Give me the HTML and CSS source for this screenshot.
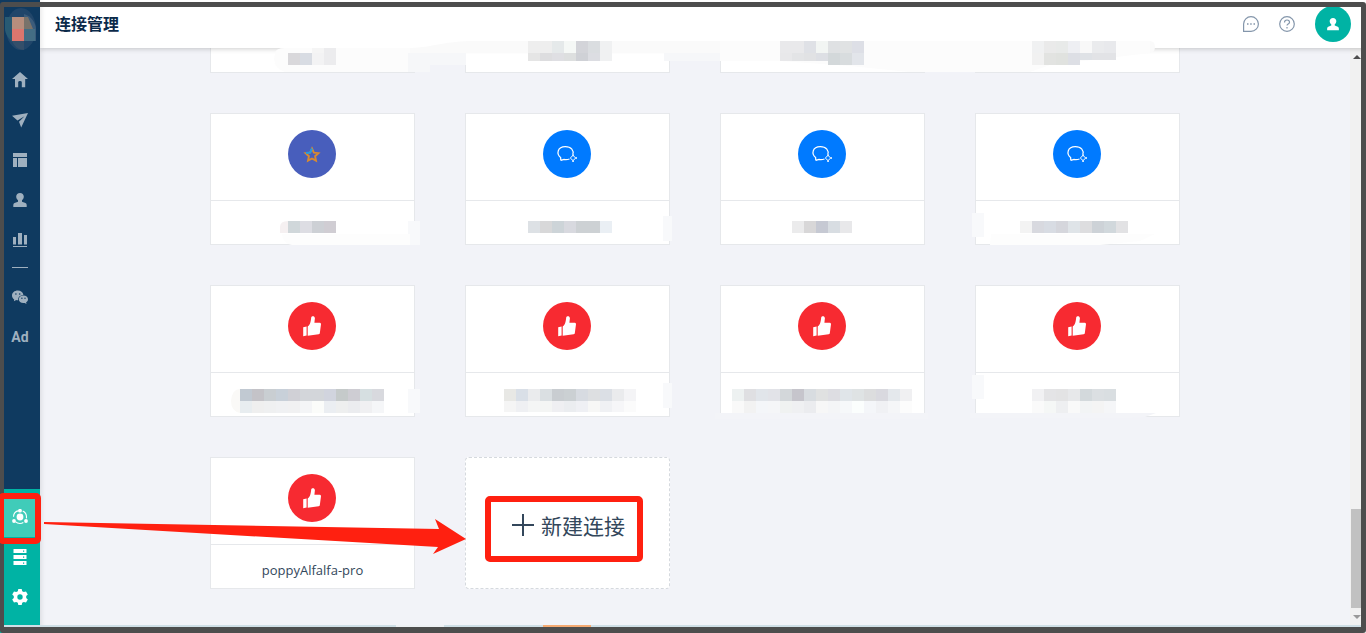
FILE: index.html
```html
<!DOCTYPE html>
<html lang="zh-CN">
<head>
  <meta charset="UTF-8" />
  <title>连接管理</title>
  <link rel="stylesheet" href="styles.css">
</head>
<body>

  <!-- Shared icons -->
  <svg class="sprite" aria-hidden="true">
    <symbol id="icon-chat" viewBox="0 0 48 48">
      <path d="M17.800 30.400L17.600 27.400C13.200 24.200 14.300 16.600 22.300 16.600C28.500 16.600 31 20.800 29.800 24.400M17.800 30.400L21 29.400C23 29.800 25 29.500 26.500 29" fill="none" stroke="#fff" stroke-width="1.200"/>
      <path d="M30 25.400L32.700 28L30 30.600L27.300 28Z" fill="none" stroke="#fff" stroke-width="1"/>
      <path d="M29.300 24.300h1.500v1.500h-1.500zM32.500 27.200h1.500v1.500h-1.500zM29.300 30.500h1.500v1.500h-1.500z" fill="#fff"/>
    </symbol>
    <symbol id="icon-like" viewBox="0 0 48 48">
      <path d="M15.200 25.200L18.600 24.500V33.500L15.200 34.200Z" fill="#fff"/>
      <path d="M19.700 24.600C22.500 22.500 22.800 19 23.200 15.500C23.500 13.600 26.900 13.600 26.900 16.200L26.400 20.800H31.600Q33 20.800 33 22.200L31.800 31.200Q31.600 32 30.600 32.200L19.700 33.700Z" fill="#fff"/>
    </symbol>
    <symbol id="icon-star" viewBox="0 0 48 48">
      <path d="M24 18.500L25.900 22.600L30.400 23.100L27.100 26.200L28 30.700L24 28.500L20 30.700L20.900 26.200L17.600 23.100L22.100 22.600Z" fill="none" stroke="#d98a2f" stroke-width="1.900"/>
      <path d="M18 23L22.100 22.600L24 18.500" fill="none" stroke="#1e9be6" stroke-width="2"/>
    </symbol>
    <symbol id="icon-user" viewBox="0 0 16 16">
      <path d="M8 1C10.300 1 11.800 2.500 11.800 4.600C11.800 6.400 11 7.500 10 8.300V9.700L13.500 11Q14.700 11.600 14.700 13V15H1.300V13Q1.300 11.600 2.500 11L6 9.700V8.300C5 7.500 4.200 6.400 4.200 4.600C4.200 2.500 5.700 1 8 1Z" fill="currentColor"/>
    </symbol>
  </svg>

  <div class="app">
    <nav class="sidebar" aria-label="主导航">
      <a href="#" class="logo" aria-label="首页标志">
        <svg width="40" height="54" viewBox="0 0 40 54" aria-hidden="true">
          <ellipse cx="21" cy="29" rx="15" ry="21" fill="#21466a"/>
          <path d="M5 17H12V42C8 38 5 33 5 29Z" fill="#285a73"/>
          <path d="M24 14C31 16 36 23 36 29V41H24Z" fill="#3c5c7b"/>
          <path d="M12 17H24V29H12Z" fill="#b78e7d"/>
          <path d="M24 17H28L33 29H24Z" fill="#79736b"/>
          <path d="M12 29H24V41H12Z" fill="#dc766e"/>
          <path d="M24 29H35V41H24Z" fill="#446d84"/>
          <path d="M12 41H24V50C18 50 14 46 12 41Z" fill="#344f6a"/>
        </svg>
      </a>
      <a href="#" aria-label="首页">
        <svg viewBox="0 0 16 16"><path d="M8 0L16 7H13.200V15.200H9.800V10.300Q9.800 9 8 9Q6.200 9 6.200 10.300V15.200H3V7H0Z" fill="currentColor"/></svg>
      </a>
      <a href="#" aria-label="营销">
        <svg viewBox="0 0 16 16"><path d="M16 1L9.200 15.500L7 9.800L12.500 4.200L5.500 8.600L0 3.800Z" fill="currentColor"/></svg>
      </a>
      <a href="#" aria-label="内容">
        <svg viewBox="0 0 16 16"><path d="M1 1H15V5H1ZM1 6H5V15H1ZM6 6H15V15H6Z" fill="currentColor"/></svg>
      </a>
      <a href="#" aria-label="客户">
        <svg><use href="#icon-user"/></svg>
      </a>
      <a href="#" aria-label="报表">
        <svg viewBox="0 0 16 16"><path d="M1 5H4V12.500H1ZM6 1H10V12.500H6ZM12 3H15V12.500H12ZM1 14H15V15H1Z" fill="currentColor"/></svg>
      </a>
      <hr>
      <a href="#" aria-label="微信">
        <svg viewBox="0 0 16 16">
          <path d="M5.800 1.600C2.500 1.600 0 3.800 0 6.500C0 8.200 .9 9.500 2.200 10.400L1.900 12.300L4.200 11.100C4.800 11.300 5.500 11.400 6.200 11.300C5.800 8.200 8 6 11.400 5.900C11 3.400 8.700 1.600 5.800 1.600Z" fill="currentColor"/>
          <path d="M11.400 6.500C8.700 6.500 6.800 8.200 6.800 10.300C6.800 12.400 8.700 14.100 11.400 14.100L12.700 13.900L14.500 14.900L14.100 13.300C15.300 12.600 16 11.500 16 10.300C16 8.200 14 6.500 11.400 6.500Z" fill="currentColor"/>
          <g fill="#0f3a60"><circle cx="3.900" cy="5" r=".8"/><circle cx="7.700" cy="5" r=".8"/><circle cx="9.900" cy="9.200" r=".7"/><circle cx="13" cy="9.200" r=".7"/></g>
        </svg>
      </a>
      <a href="#" class="ad">Ad</a>

      <div class="sidebar-bottom">
        <a href="#" class="active" aria-label="连接管理">
          <svg viewBox="0 0 16 16">
            <circle cx="8" cy="8" r="6.500" fill="none" stroke="currentColor" stroke-width="1.100" stroke-dasharray="8.500 5.110" stroke-dashoffset="-2.800" transform="rotate(-90 8 8)"/>
            <circle cx="8" cy="8" r="3.400" fill="currentColor"/>
            <circle cx="8" cy="1.700" r="1.900" fill="currentColor"/>
            <circle cx="2" cy="12" r="1.900" fill="currentColor"/>
            <circle cx="14" cy="12" r="1.900" fill="currentColor"/>
          </svg>
        </a>
        <a href="#" aria-label="数据">
          <svg viewBox="0 0 16 16"><path d="M1.500 0H14.500V4H1.500ZM1.500 6H14.500V10H1.500ZM1.500 12H14.500V16H1.500Z" fill="currentColor"/><path d="M11 1.500h1.200v1.200H11zM11 7.500h1.200v1.200H11zM11 13.500h1.200v1.200H11z" fill="#00b3a4"/></svg>
        </a>
        <a href="#" aria-label="设置">
          <svg viewBox="0 0 16 16"><path d="M6.300 0H9.700L10.200 2.200L11.800 3.100L14 2.500L15.800 5.500L14.200 7V9L15.800 10.500L14 13.500L11.800 12.900L10.200 13.800L9.700 16H6.300L5.800 13.800L4.200 12.900L2 13.500L.2 10.500L1.800 9V7L.2 5.500L2 2.500L4.200 3.100L5.800 2.200ZM8 5.300A2.700 2.700 0 1 0 8 10.700A2.700 2.700 0 1 0 8 5.300Z" fill="currentColor" fill-rule="evenodd"/></svg>
        </a>
      </div>
    </nav>

    <div class="content">
      <header class="topbar">
        <h1>连接管理</h1>
        <button class="icon-btn" aria-label="消息">
          <svg viewBox="0 0 16 16"><path d="M.6 15.300V8A7.400 7.300 0 1 1 8 15.300Z" fill="none" stroke="currentColor" stroke-width="1.200"/><path d="M4 7.300h1.500v1.500H4zM7.200 7.300h1.500v1.500H7.200zM10.500 7.300H12v1.500h-1.500z" fill="currentColor"/></svg>
        </button>
        <button class="icon-btn" aria-label="帮助">
          <svg viewBox="0 0 16 16" fill="none" stroke="currentColor" stroke-width="1.200"><circle cx="8" cy="8" r="7.300"/><path d="M5.500 6.500C5.500 3.200 10.500 3.200 10.500 6.200C10.500 8 8 8 8 9.500M8 11V12.400"/></svg>
        </button>
        <button class="avatar" aria-label="账户">
          <svg width="14" height="14"><use href="#icon-user"/></svg>
        </button>
      </header>

      <div class="body">
        <main>
          <div class="cards" id="cards">
            <!-- Smudges over the names -->
            <svg class="smudges" id="smudges" viewBox="0 0 970 648" aria-hidden="true">
              <path d="M200 107C225 106 230 101 260 100H940Q945 100 945 106Q945 112 938 112H200Z" fill="#fafafa"/>
              <path d="M65 112Q66 107 75 107H200V124H210V131H75Q65 128 64 118Z" fill="#fcfcfc"/>
              <path d="M198 112H220V131H198ZM210 112H256V124H210ZM454 112H510V120H454ZM714 112H765V124H714Z" fill="#f6f7f9"/>
              <path d="M510 100H762V131H700L640 125L570 120H510ZM762 100H940V112L840 124L820 131H762Z" fill="#fcfcfc"/>
              <path d="M198 280H210V304H198ZM453 275H462V300H453ZM762 272H774V296H762ZM198 448H210V472H198ZM453 442H462V467H453ZM762 434H774V458H762Z" fill="#f8f9fb"/>
              <path d="M70 286Q70 280 78 280V292H70Z" fill="#f5f0f1"/>
              <path d="M21 460Q22 448 30 448V472Q21 470 21 460Z" fill="#faf9f7"/>
              <path d="M72 293H200V304H82Q72 302 72 293ZM781 293H945L930 300L890 304H780Z" fill="#fdfdfd"/>
              <path d="M505 472H718V478H505ZM760 472H946L935 476L920 477H760Z" fill="#f3f4f8"/>
            </svg>
          </div>
        </main>
        <div class="scrollbar" aria-hidden="true">
          <span class="up"></span>
          <span class="thumb"></span>
          <span class="down"></span>
        </div>
      </div>
    </div>
  </div>

  <!-- Window frame -->
  <div class="taskbar" aria-hidden="true"><i class="light"></i><i class="orange"></i></div>
  <div class="frame" aria-hidden="true"></div>

  <!-- Red marks -->
  <svg class="marks" aria-hidden="true">
    <rect x="1" y="496" width="37" height="45" rx="2"/>
    <rect x="488" y="499" width="152" height="60" rx="2"/>
    <path d="M44 522L439 529L435 519L466 539L433 554L438 547L44 524Z"/>
  </svg>

<script>
  const names = ["", "", "", "", "", "", "", "", "", "", "", "", "poppyAlfalfa-pro"];
  const types = ["like", "like", "like", "like", "star", "chat", "chat", "chat", "like", "like", "like", "like", "like"];

  // x, y, height, colours of the 12px blocks
  const blocks = [
    [102, 107, 5, "f5f5f5 ececee"],
    [78, 112, 12, "d9d8db d8dce3 f3f3f4 ececee"],
    [318, 100, 12, "eeeeee eeeeee e5e9ea f5f8f6 d3d4d9 dadde0 f0f1f2"],
    [318, 112, 8, "e5e5e5 dddddf dfdfe3 dddfdf cfd1d6 dcdde2 f0f1f2"],
    [570, 100, 12, "e9e9eb e9e9eb dfe1e6 f2f5f3 dfe1e3 e0e2e3 dddfe6"],
    [570, 112, 8, "e8e8ea e3e4e6 e1e2e4 dddfe4 d3d8da d8dcde e2e5ea"],
    [618, 120, 4, "d3d8da d8dcde e2e5ea"],
    [822, 100, 12, "f0f1f2 eaeaea e8eae9 eeeff3 f8f8f8 eaebed e8e9ec"],
    [822, 112, 7, "f1f1f1 e2e3e1 e0e2df dddfe5 dfe2e6 e2e3e6 e2e3e6"],
    [822, 119, 5, "f1f1f1 e2e3e1 e0e2df dddfe5"],

    [78, 280, 12, "d0d7da dddde3 cdd0d5 d0cdd3"],
    [318, 280, 12, "dde1e5 d8d8d9 cdd4d8 d8d9df cdd1d4 cdd1d4 eaeff4"],
    [582, 280, 12, "ebebec d8d7d8 c6c9d3 d8dde2 e8e8ea"],
    [810, 280, 12, "f3f3f3 d8d9df d8dce3 d5d6dc dfe4e8 dddddf cdd2d7 d1d8dc e2e2e4"],

    [30, 448, 12, "c1c9d2 c4c3c8 c9ced2 c8d0d9 d0d0d6 d3d6da d3d6da d1d4de c5caca cecdd3 d6dfe1 d8d9de"],
    [30, 460, 12, "e8edf0 efefef eff0f1 f0f1f3 f1f1f2 f4f5f7 fbfcfa ebeef2 eeefef ebecef f0f0f2 f5f6f8"],
    [294, 448, 12, "e8e8e5 d9dfe7 eaebed dadfe2 c9cdd1 cbd0d3 d7dbe1 dddfe1 dbdfe5 eaebed f4f4f6"],
    [294, 460, 11, "f5f5f5 eff0f3 f4f5f5 f4f5f4 efeff2 ebedf0 eff0f4 f7f7f6 f0f1f4 f6f6f8 fbfbfb"],
    [522, 448, 12, "edf1f1 dfdfe2 e1e5ea e2e3e8 d3d7da c6c5cc d8dce0 e0e1e1 dddde2 e0e5e9 dfe3e4 dcddde d9d9df e4e8ec f0f0f2"],
    [522, 460, 12, "f9f9f9 f2f2f2 f4f6f9 f5f6f8 f0f2f1 eff0f2 ebecef f7f7f7 f4f5f7 f6f8fa fbfefd f4f6f9 f0f1f4 f5f6f8 fcfcfc"],
    [822, 448, 12, "f1f1f3 e4e4e6 e3e3e4 e7e8ea d3d9dc dbdfe2 d9dee1"],
    [822, 460, 12, "fafafa f5f7f6 eeeff1 f9f9f9 f2f4f5 f4f4f4 f5f6f8"]
  ];

  const cards = document.getElementById("cards");
  const smudges = document.getElementById("smudges");

  types.forEach((type, i) => {
    const card = document.createElement("article");
    card.className = "card";
    card.innerHTML = `
      <div class="card-icon"><svg class="${type}"><use href="#icon-${type}"/></svg></div>
      <div class="card-name">${names[i]}</div>
    `;
    cards.insertBefore(card, smudges);
  });

  const add = document.createElement("button");
  add.className = "add-card";
  add.innerHTML = `
    <svg width="22" height="22" viewBox="0 0 22 22"><path d="M11 0V22M0 11H22" stroke="currentColor" stroke-width="2"/></svg>
    <span>新建连接</span>
  `;
  cards.insertBefore(add, smudges);

  blocks.forEach(([x, y, height, colors]) => {
    colors.split(" ").forEach((color, i) => {
      const rect = document.createElementNS("http://www.w3.org/2000/svg", "rect");
      rect.setAttribute("x", x + i * 12);
      rect.setAttribute("y", y);
      rect.setAttribute("width", 12);
      rect.setAttribute("height", height);
      rect.setAttribute("fill", "#" + color);
      smudges.appendChild(rect);
    });
  });
</script>

</body>
</html>
```
FILE: styles.css
```css
* {
  box-sizing: border-box;
}

body {
  margin: 0;
  overflow: hidden;
  background: #f2f3f8;
  color: #33475b;
  font-family: "Open Sans", "Noto Sans CJK SC", sans-serif;
  font-size: 13px;
}

button {
  padding: 0;
  border: none;
  background: none;
  font-family: inherit;
  cursor: pointer;
}

.sprite {
  display: none;
}

.app {
  display: flex;
  height: 100vh;
}

/* Sidebar */
.sidebar {
  display: flex;
  flex-direction: column;
  width: 40px;
  background: #0f3a60;
  box-shadow: 0 0 6px rgba(0,0,0,0.15);
  z-index: 3;
}

.sidebar a {
  display: flex;
  align-items: center;
  justify-content: center;
  height: 40px;
  color: #9fb0bf;
  text-decoration: none;
}

.sidebar a svg {
  width: 16px;
  height: 16px;
}

.sidebar a.logo {
  height: 60px;
  align-items: flex-start;
}

.sidebar a.logo svg {
  width: 40px;
  height: 54px;
}

.sidebar hr {
  width: 16px;
  height: 1px;
  margin: 7px auto 9px;
  border: none;
  background: #9fb0bf;
}

.sidebar a.ad {
  font-family: Roboto, sans-serif;
  font-size: 14px;
  font-weight: 700;
}

.sidebar-bottom {
  margin-top: auto;
  padding: 8px 0 16px;
  background: #00b3a4;
}

.sidebar-bottom a {
  color: #fff;
}

.sidebar-bottom a.active {
  background: #40ccb9;
}

/* Header */
.content {
  display: flex;
  flex: 1;
  flex-direction: column;
  min-width: 0;
}

.topbar {
  position: relative;
  display: flex;
  flex: none;
  align-items: center;
  gap: 20px;
  height: 48px;
  padding: 0 15px;
  background: #fff;
  box-shadow: 0 1px 5px rgba(0,0,0,0.2);
  z-index: 1;
}

.topbar h1 {
  flex: 1;
  margin: 0;
  padding-bottom: 2px;
  color: #0b2a4a;
  font-size: 16px;
  font-weight: 700;
}

.icon-btn {
  width: 16px;
  height: 16px;
  color: #8496ab;
}

.icon-btn svg {
  display: block;
  width: 16px;
  height: 16px;
}

.avatar {
  display: flex;
  align-items: center;
  justify-content: center;
  width: 36px;
  height: 36px;
  border-radius: 50%;
  background: #00b3a4;
  color: #fff;
}

.avatar svg {
  overflow: visible;
}

/* Cards */
.body {
  display: flex;
  flex: 1;
  min-height: 0;
}

main {
  display: flex;
  flex: 1;
  flex-direction: column;
  justify-content: flex-end;
  align-items: center;
  padding-bottom: 44px;
}

.cards {
  position: relative;
  display: grid;
  flex: none;
  grid-template-columns: repeat(4, 205px);
  gap: 40px 50px;
}

.card {
  height: 132px;
  border: 1px solid #e6e8eb;
  background: #fff;
}

.card-icon {
  display: flex;
  justify-content: center;
  height: 87px;
  padding: 16px 1px 0 0;
  border-bottom: 1px solid #e6e8eb;
}

.card-icon svg {
  width: 48px;
  height: 48px;
  border-radius: 50%;
}

.like {
  background: #f72a31;
}

.chat {
  background: #007aff;
}

.star {
  background: #485ebc;
}

.card-name {
  padding-top: 15px;
  line-height: 20px;
  text-align: center;
}

.add-card {
  display: flex;
  align-items: center;
  justify-content: center;
  gap: 7px;
  height: 132px;
  padding: 4px 0 0 2px;
  border: 1px dashed #d5d9de;
  border-radius: 4px;
  background: #fff;
  color: #33475b;
  font-size: 21px;
  font-weight: 400;
}

.smudges {
  position: absolute;
  inset: 0;
  width: 100%;
  height: 100%;
  pointer-events: none;
  z-index: 2;
}

/* Scrollbar */
.scrollbar {
  display: flex;
  flex-direction: column;
  align-items: flex-end;
  width: 16px;
  background: #f1f1f1;
}

.up,
.down {
  margin: 7px 5px 0 0;
  border: 4px solid transparent;
  border-top: none;
  border-bottom: 4px solid #4d4d4d;
}

.thumb {
  width: 15px;
  height: 99px;
  margin-top: auto;
  background: #c1c1c1;
}

.down {
  margin-bottom: 14px;
  border-top: 4px solid #999;
  border-bottom: none;
}

/* Frame and marks */
.taskbar {
  position: fixed;
  inset: auto 0 6px;
  height: 2px;
  background: #cfdfe6;
  z-index: 4;
}

.taskbar i {
  position: absolute;
  top: 0;
  width: 48px;
  height: 2px;
}

.taskbar .light {
  left: 396px;
  background: #eef1f4;
}

.taskbar .orange {
  left: 543px;
  background: #f5aa72;
}

.frame {
  position: fixed;
  inset: 2px 0 0;
  border: solid #4d4d4d;
  border-width: 5px 5px 6px 4px;
  border-radius: 3px;
  pointer-events: none;
  z-index: 5;
}

.marks {
  position: fixed;
  inset: 0;
  width: 100%;
  height: 100%;
  pointer-events: none;
  z-index: 6;
}

.marks rect {
  fill: none;
  stroke: #ff2010;
  stroke-width: 6px;
}

.marks path {
  fill: #ff2010;
}
```
